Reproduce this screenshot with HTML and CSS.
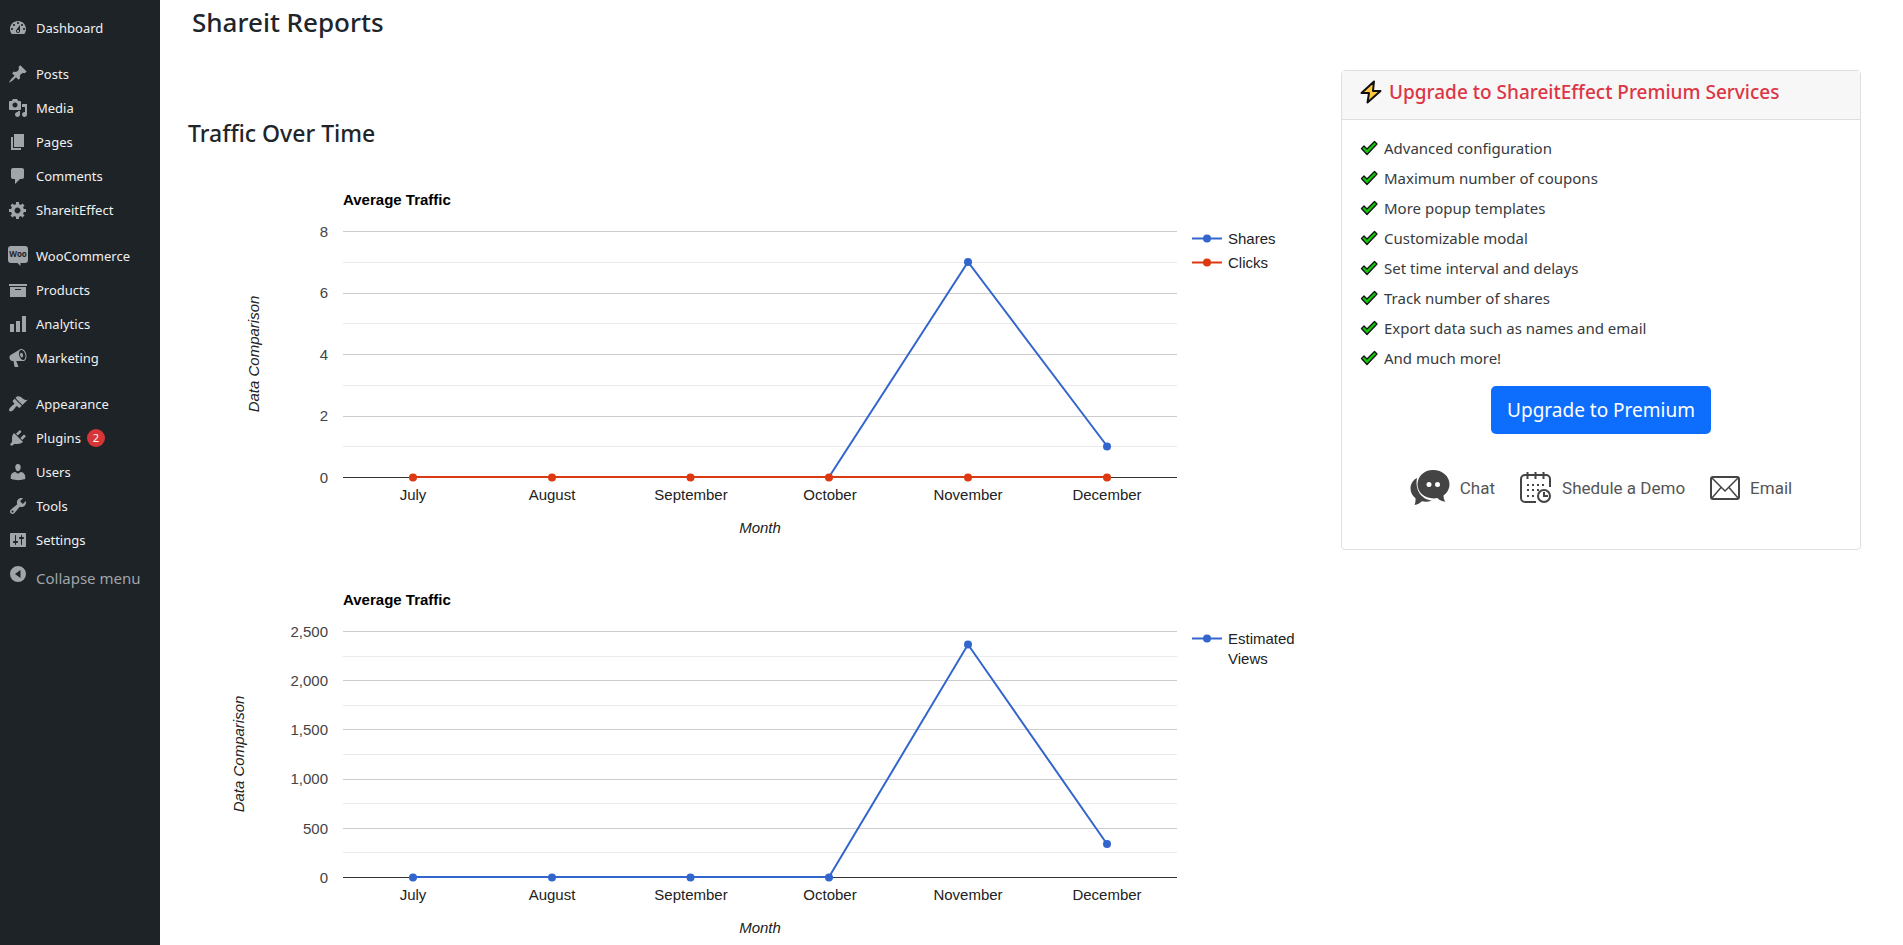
FILE: index.html
```html
<!DOCTYPE html>
<html lang="en">
<head>
<meta charset="utf-8">
<title>Shareit Reports</title>
<link rel="stylesheet" href="styles.css">
</head>
<body>
<div class="layout">
  <nav class="sidebar" aria-label="Main menu">
    <ul class="menu-group">
      <li><a class="menu-item" href="#"><svg class="menu-icon" viewBox="0 0 20 20"><path d="M3.76 16h12.48c1.1-1.37 1.76-3.11 1.76-5 0-4.42-3.58-8-8-8s-8 3.58-8 8c0 1.89.66 3.63 1.76 5zM10 4c.55 0 1 .45 1 1s-.45 1-1 1-1-.45-1-1 .45-1 1-1zM6 6c.55 0 1 .45 1 1s-.45 1-1 1-1-.45-1-1 .45-1 1-1zm8 0c.55 0 1 .45 1 1s-.45 1-1 1-1-.45-1-1 .45-1 1-1zm-5.37 5.55L12 7v6c0 1.1-.9 2-2 2s-2-.9-2-2c0-.57.24-1.08.63-1.45zM4 10c.55 0 1 .45 1 1s-.45 1-1 1-1-.45-1-1 .45-1 1-1zm12 0c.55 0 1 .45 1 1s-.45 1-1 1-1-.45-1-1 .45-1 1-1zm-5 3c0-.55-.45-1-1-1s-1 .45-1 1 .45 1 1 1 1-.45 1-1z"/></svg>Dashboard</a></li>
    </ul>
    <ul class="menu-group">
      <li><a class="menu-item" href="#"><svg class="menu-icon" viewBox="0 0 20 20"><path d="M10.44 3.02l1.82-1.82 6.36 6.35-1.83 1.82c-1.05-.68-2.48-.57-3.41.36l-.75.75c-.92.93-1.04 2.35-.35 3.41l-1.83 1.82-2.41-2.41-2.8 2.79c-.42.42-3.38 2.71-3.8 2.29s1.86-3.39 2.28-3.81l2.79-2.79L4.1 9.36l1.83-1.82c1.05.69 2.48.57 3.4-.36l.75-.75c.93-.92 1.05-2.35.36-3.41z"/></svg>Posts</a></li>
      <li><a class="menu-item" href="#"><svg class="menu-icon" viewBox="0 0 20 20"><path d="M13 11V4c0-.55-.45-1-1-1h-1.67L9 1H5L3.67 3H2c-.55 0-1 .45-1 1v7c0 .55.45 1 1 1h10c.55 0 1-.45 1-1zM7 4.5c1.38 0 2.5 1.12 2.5 2.5S8.38 9.5 7 9.5 4.5 8.38 4.5 7 5.62 4.5 7 4.5zM14 6h5v10.5c0 1.38-1.12 2.5-2.5 2.5S14 17.88 14 16.5s1.12-2.5 2.5-2.5c.17 0 .34.02.5.05V9h-3V6zm-4 8.05V13h2v3.5c0 1.38-1.12 2.5-2.5 2.5S7 17.88 7 16.5 8.12 14 9.5 14c.17 0 .34.02.5.05z"/></svg>Media</a></li>
      <li><a class="menu-item" href="#"><svg class="menu-icon" viewBox="0 0 20 20"><path d="M6 15V2h10v13H6zm-1 1h8v2H3V5h2v11z"/></svg>Pages</a></li>
      <li><a class="menu-item" href="#"><svg class="menu-icon" viewBox="0 0 20 20"><path d="M5 2h9c1.1 0 2 .9 2 2v7c0 1.1-.9 2-2 2h-2l-5 5v-5H5c-1.1 0-2-.9-2-2V4c0-1.1.9-2 2-2z"/></svg>Comments</a></li>
      <li><a class="menu-item" href="#"><svg class="menu-icon" viewBox="0 0 20 20"><path d="M18 12h-2.18c-.17.7-.44 1.35-.81 1.93l1.54 1.54-2.1 2.1-1.54-1.54c-.58.36-1.23.63-1.91.79V19H8v-2.18c-.68-.16-1.33-.43-1.91-.79l-1.54 1.54-2.12-2.12 1.54-1.54c-.36-.58-.63-1.23-.79-1.91H1V9.03h2.17c.16-.7.44-1.35.8-1.94L2.43 5.55l2.1-2.1 1.54 1.54c.58-.37 1.24-.64 1.93-.81V2h3v2.18c.68.16 1.33.43 1.91.79l1.54-1.54 2.12 2.12-1.54 1.54c.36.59.64 1.24.8 1.94H18V12zm-8.5 1.5c1.66 0 3-1.34 3-3s-1.34-3-3-3-3 1.34-3 3 1.34 3 3 3z"/></svg>ShareitEffect</a></li>
    </ul>
    <ul class="menu-group">
      <li><a class="menu-item" href="#"><svg class="menu-icon" viewBox="0 0 20 20"><path d="M3 0h14a3 3 0 0 1 3 3v11a3 3 0 0 1-3 3h-4.500v3L9.500 17H3a3 3 0 0 1-3-3V3a3 3 0 0 1 3-3z"/><text class="woo-mark" x="10" y="11" text-anchor="middle">Woo</text></svg>WooCommerce</a></li>
      <li><a class="menu-item" href="#"><svg class="menu-icon" viewBox="0 0 20 20"><path d="M19 4v2H1V4h18zM2 7h16v10H2V7zm11 3V9H7v1h6z"/></svg>Products</a></li>
      <li><a class="menu-item" href="#"><svg class="menu-icon" viewBox="0 0 20 20"><path d="M18 18V2h-4v16h4zm-6 0V7H8v11h4zm-6 0v-8H2v8h4z"/></svg>Analytics</a></li>
      <li><a class="menu-item" href="#"><svg class="menu-icon" viewBox="0 0 20 20"><path d="M18.150 5.940c.46 1.620.38 3.220-.02 4.480-.42 1.280-1.260 2.180-2.300 2.480-.16.060-.26.060-.4.060-.06.020-.12.020-.18.020-.06.020-.14.020-.22.020h-6.800l2.220 5.500c.02.140-.06.260-.14.340-.08.100-.24.160-.34.160H6.950c-.1 0-.26-.06-.34-.16-.08-.08-.16-.2-.14-.34l-1-5.500H4.250l-.02-.02c-.5.060-1.080-.18-1.540-.62s-.88-1.080-1.060-1.880c-.24-.8-.2-1.560-.02-2.200.18-.62.58-1.080 1.060-1.300l.02-.02 9-5.400c.1-.06.180-.1.240-.16.060-.04.140-.08.240-.12.160-.08.280-.12.500-.18 1.040-.3 2.240.1 3.220.98s1.840 2.240 2.260 3.860zm-2.580 5.980h-.02c.4-.1.740-.34 1.040-.7.580-.7.860-1.760.860-3.040 0-.64-.1-1.300-.28-1.980-.34-1.360-1.020-2.500-1.780-3.240s-1.680-1.100-2.460-.88c-.82.220-1.400.960-1.700 2-.32 1.040-.28 2.360.060 3.720.38 1.360 1 2.500 1.800 3.240.78.740 1.620 1.100 2.480.88zm-2.540-7.080c.22-.04.420-.02.620.04.380.160.760.480 1.020 1s.42 1.200.42 1.780c0 .3-.04.560-.12.800-.18.480-.44.840-.86.940-.34.100-.8-.06-1.140-.4s-.64-.86-.78-1.500c-.18-.62-.12-1.240.02-1.720s.48-.84.82-.94z"/></svg>Marketing</a></li>
    </ul>
    <ul class="menu-group">
      <li><a class="menu-item" href="#"><svg class="menu-icon" viewBox="0 0 20 20"><path d="M14.480 11.060L7.410 3.990l1.500-1.500c.5-.56 2.300-.47 3.510.32 1.210.8 1.430 1.280 2.910 2.100 1.180.64 2.450 1.260 4.450.85zm-.71.710L6.700 4.700 4.930 6.470c-.39.390-.39 1.020 0 1.410l1.060 1.060c.39.390.39 1.030 0 1.420-.6.600-1.430 1.110-2.210 1.690-.35.260-.7.530-1.010.84C1.430 14.230.4 16.080 1.400 17.070c.99 1 2.840-.03 4.180-1.360.31-.31.580-.66.850-1.020.57-.78 1.080-1.610 1.690-2.210.39-.39 1.020-.39 1.410 0l1.060 1.060c.39.390 1.020.39 1.410 0z"/></svg>Appearance</a></li>
      <li><a class="menu-item" href="#"><svg class="menu-icon" viewBox="0 0 20 20"><path d="M13.110 4.360L9.870 7.600 8 5.730l3.240-3.240c.35-.34 1.050-.2 1.560.32.520.51.660 1.210.31 1.550zm-8 1.770l.91-1.120 9.010 9.010-1.190.84c-.71.710-2.630 1.160-3.820 1.160H6.140L4.900 17.260c-.59.590-1.540.59-2.120 0-.59-.58-.59-1.530 0-2.120l1.240-1.240v-3.880c0-1.130.4-3.190 1.090-3.890zm7.260 3.970l3.240-3.240c.34-.35 1.040-.21 1.550.31.520.51.660 1.210.31 1.550l-3.240 3.250z"/></svg>Plugins<span class="badge">2</span></a></li>
      <li><a class="menu-item" href="#"><svg class="menu-icon" viewBox="0 0 20 20"><path d="M10 9.250c-2.270 0-2.730-3.440-2.730-3.440C7 4.020 7.820 2 9.970 2c2.160 0 2.980 2.020 2.710 3.810 0 0-.41 3.440-2.680 3.440zm0 2.570L12.720 10c2.390 0 4.520 2.330 4.520 4.530v2.490s-3.650 1.130-7.240 1.130c-3.650 0-7.240-1.130-7.240-1.130v-2.490c0-2.250 1.940-4.480 4.470-4.480z"/></svg>Users</a></li>
      <li><a class="menu-item" href="#"><svg class="menu-icon" viewBox="0 0 20 20"><path d="M16.680 9.770c-1.340 1.340-3.300 1.670-4.950.99l-5.410 6.520c-.99.990-2.590.99-3.580 0s-.99-2.590 0-3.570l6.520-5.420c-.68-1.650-.35-3.610.99-4.950 1.280-1.280 3.120-1.620 4.720-1.060l-2.890 2.890 2.820 2.820 2.860-2.870c.53 1.580.18 3.390-1.080 4.650zM3.810 16.210c.4.390 1.040.39 1.430 0 .4-.4.400-1.040 0-1.430-.39-.4-1.030-.4-1.430 0-.39.390-.39 1.030 0 1.430z"/></svg>Tools</a></li>
      <li><a class="menu-item" href="#"><svg class="menu-icon" viewBox="0 0 20 20"><path d="M18 16V4c0-.55-.45-1-1-1H3c-.55 0-1 .45-1 1v12c0 .55.45 1 1 1h14c.55 0 1-.45 1-1zM8 11h1c.55 0 1 .45 1 1s-.45 1-1 1H8v1.500c0 .28-.22.5-.5.5s-.5-.22-.5-.5V13H6c-.55 0-1-.45-1-1s.45-1 1-1h1V5.500c0-.28.22-.5.5-.5s.5.220.5.500V11zm5-2h-1c-.55 0-1-.45-1-1s.45-1 1-1h1V5.500c0-.28.22-.5.5-.5s.5.220.5.500V7h1c.55 0 1 .45 1 1s-.45 1-1 1h-1v5.500c0 .28-.22.5-.5.5s-.5-.22-.5-.5V9z"/></svg>Settings</a></li>
    </ul>
    <button class="collapse" type="button"><svg class="menu-icon" viewBox="0 0 20 20"><path fill-rule="evenodd" d="M10 2a8 8 0 1 0 0 16 8 8 0 0 0 0-16zM12.500 6v8L7 10z"/></svg><span>Collapse menu</span></button>
  </nav>

  <main class="main">
    <h1 class="page-title">Shareit Reports</h1>
    <div class="report">
      <section class="charts">
        <h2 class="section-title">Traffic Over Time</h2>
        <svg class="chart" viewBox="0 0 1130 400" role="img" aria-label="Average traffic: shares and clicks by month">
          <text class="chart-title" x="155" y="51">Average Traffic</text>
          <path class="grid-minor" d="M155 108.500H989M155 169.500H989M155 231.500H989M155 292.500H989"/>
          <path class="grid-major" d="M155 77.500H989M155 139.500H989M155 200.500H989M155 262.500H989"/>
          <path class="axis" d="M155 323.500H989"/>
          <g class="y-labels"><text x="140" y="83">8</text><text x="140" y="144">6</text><text x="140" y="206">4</text><text x="140" y="267">2</text><text x="140" y="329">0</text></g>
          <g class="x-labels"><text x="225" y="346">July</text><text x="364" y="346">August</text><text x="503" y="346">September</text><text x="642" y="346">October</text><text x="780" y="346">November</text><text x="919" y="346">December</text></g>
          <text class="axis-title" x="572" y="379">Month</text>
          <text class="axis-title" transform="translate(71 200) rotate(-90)">Data Comparison</text>
          <g class="series-blue"><polyline points="225,323 364,323 503,323 641,323 780,108 919,292"/><circle cx="780" cy="108" r="4"/><circle cx="919" cy="292.500" r="4"/></g>
          <g class="series-red"><polyline points="225,323 919,323"/><circle cx="225" cy="323.500" r="4"/><circle cx="364" cy="323.500" r="4"/><circle cx="502.500" cy="323.500" r="4"/><circle cx="641" cy="323.500" r="4"/><circle cx="780" cy="323.500" r="4"/><circle cx="919" cy="323.500" r="4"/></g>
          <g class="series-blue"><path d="M1004 84.500h30"/><circle cx="1019" cy="84.500" r="4"/></g><text class="legend" x="1040" y="90">Shares</text>
          <g class="series-red"><path d="M1004 108.500h30"/><circle cx="1019" cy="108.500" r="4"/></g><text class="legend" x="1040" y="114">Clicks</text>
        </svg>
        <svg class="chart" viewBox="0 0 1130 391" role="img" aria-label="Average traffic: estimated views by month">
          <text class="chart-title" x="155" y="51">Average Traffic</text>
          <path class="grid-minor" d="M155 102.500H989M155 151.500H989M155 200.500H989M155 249.500H989M155 298.500H989"/>
          <path class="grid-major" d="M155 77.500H989M155 126.500H989M155 175.500H989M155 225.500H989M155 274.500H989"/>
          <path class="axis" d="M155 323.500H989"/>
          <g class="y-labels"><text x="140" y="83">2,500</text><text x="140" y="132">2,000</text><text x="140" y="181">1,500</text><text x="140" y="230">1,000</text><text x="140" y="280">500</text><text x="140" y="329">0</text></g>
          <g class="x-labels"><text x="225" y="346">July</text><text x="364" y="346">August</text><text x="503" y="346">September</text><text x="642" y="346">October</text><text x="780" y="346">November</text><text x="919" y="346">December</text></g>
          <text class="axis-title" x="572" y="379">Month</text>
          <text class="axis-title" transform="translate(56 200) rotate(-90)">Data Comparison</text>
          <g class="series-blue"><polyline points="225,323 364,323 503,323 641,323 780,90.500 919,290"/><circle cx="225" cy="323.500" r="4"/><circle cx="364" cy="323.500" r="4"/><circle cx="502.500" cy="323.500" r="4"/><circle cx="641" cy="323.500" r="4"/><circle cx="780" cy="90.500" r="4"/><circle cx="919" cy="290" r="4"/></g>
          <g class="series-blue"><path d="M1004 84.500h30"/><circle cx="1019" cy="84.500" r="4"/></g><text class="legend" x="1040" y="90">Estimated<tspan x="1040" dy="20">Views</tspan></text>
        </svg>
      </section>

      <aside class="card">
        <header class="card-header">
          <svg class="bolt" viewBox="0 0 22 24"><path d="M14 1.500 1.500 13H9L7.500 22.500 20.500 11H13z" fill="#ffc83d" stroke="#111" stroke-width="2" stroke-linejoin="round"/></svg>
          <h2 class="card-title">Upgrade to ShareitEffect Premium Services</h2>
        </header>
        <div class="card-body">
          <svg class="defs" aria-hidden="true"><symbol id="check" viewBox="0 0 18 16"><path d="M1.500 8.500 4 6l3 3L14.500 1.500 17 4 7 14.500z" fill="#16c60c" stroke="#111" stroke-width="1.300" stroke-linejoin="round"/></symbol></svg>
          <ul class="features">
            <li><svg class="check"><use href="#check"/></svg>Advanced configuration</li>
            <li><svg class="check"><use href="#check"/></svg>Maximum number of coupons</li>
            <li><svg class="check"><use href="#check"/></svg>More popup templates</li>
            <li><svg class="check"><use href="#check"/></svg>Customizable modal</li>
            <li><svg class="check"><use href="#check"/></svg>Set time interval and delays</li>
            <li><svg class="check"><use href="#check"/></svg>Track number of shares</li>
            <li><svg class="check"><use href="#check"/></svg>Export data such as names and email</li>
            <li><svg class="check"><use href="#check"/></svg>And much more!</li>
          </ul>
          <button class="upgrade" type="button">Upgrade to Premium</button>
          <div class="contacts">
            <a class="contact" href="#"><svg width="40" height="36" viewBox="0 0 40 36"><path fill="#444" d="M7 8C3 10 .5 14 .5 18.500c0 4 2 7.300 5 9.700.2 2.800-.2 5-.9 6.800 3-.6 5.400-1.900 7.300-3.800 3.200.8 6.900.6 9.800-.7C12.500 29.500 4.500 21 7 8z"/><path fill="#444" d="M23 0c9.500 0 16.500 6.300 16.500 14.200 0 5-2.600 8.800-6 11.200 0 2.400.6 4.600 2 6.400-3.700-.2-6.200-1.700-8-3.700C16 30 7.500 23 7.500 14.500 7.500 6.300 14 0 23 0z"/><circle cx="19" cy="14.500" r="2.500" fill="#fff"/><circle cx="27.500" cy="14.500" r="2.500" fill="#fff"/></svg><span>Chat</span></a>
            <a class="contact" href="#"><svg width="32" height="32" viewBox="0 0 32 32" fill="none" stroke="#444" stroke-width="2"><path d="M16 30H5a4 4 0 0 1-4-4V7a4 4 0 0 1 4-4h21a4 4 0 0 1 4 4v8M7.500 0v7M15.500 0v7M23.500 0v7"/><path stroke-dasharray="2 3" d="M7 13h18M7 18h12M7 24h8"/><circle cx="24" cy="24" r="6"/><path d="M24 20v4h4"/></svg><span>Shedule a Demo</span></a>
            <a class="contact" href="#"><svg width="30" height="24" viewBox="0 0 30 24" fill="none" stroke="#444" stroke-width="2" stroke-linejoin="round"><rect x="1" y="1" width="28" height="22" rx="2"/><path stroke-width="1.500" d="M2 2l13 13L28 2M2 22l9-10.500M28 22l-9-10.500"/></svg><span>Email</span></a>
          </div>
        </div>
      </aside>
    </div>
  </main>
</div>
</body>
</html>
```

FILE: styles.css
```css
* { box-sizing: border-box; }

body {
  margin: 0;
  background: #fff;
  color: #212529;
  font-family: "Noto Sans", "Open Sans", sans-serif;
  font-size: 15px;
}

h1, h2, ul { margin: 0; padding: 0; }
ul { list-style: none; }
a { color: inherit; text-decoration: none; }
button { font: inherit; border: 0; cursor: pointer; }

.layout { display: flex; min-height: 100vh; }

/* Sidebar */
.sidebar {
  display: flex;
  flex: none;
  flex-direction: column;
  gap: 12px;
  width: 160px;
  padding-top: 11px;
  background: #1d2327;
  color: #f0f0f1;
  font-size: 13px;
}
.menu-item {
  display: flex;
  align-items: center;
  gap: 8px;
  height: 34px;
  padding-left: 8px;
}
.menu-icon { flex: none; width: 20px; height: 20px; fill: #a0a5aa; }
.woo-mark { fill: #1d2327; font: bold 8px "Open Sans", sans-serif; }
.badge {
  width: 18px;
  height: 18px;
  margin-left: -2px;
  border-radius: 9px;
  background: #d63638;
  color: #fff;
  font-size: 11px;
  line-height: 18px;
  text-align: center;
}
.collapse {
  display: flex;
  align-items: flex-start;
  gap: 8px;
  padding: 0 0 0 8px;
  margin-top: -5px;
  background: none;
  color: #a0a5aa;
  font-size: 15px;
  line-height: 28px;
}

/* Main area */
.main { flex: 1; min-width: 0; padding: 5px 42px 0 28px; }
.page-title {
  height: 65px;
  padding-left: 4px;
  font-size: 26px;
  font-weight: 500;
  line-height: 34px;
}
.report {
  display: grid;
  grid-template-columns: minmax(0, 1fr) 520px;
  align-items: start;
  gap: 23px;
}
.section-title {
  padding-top: 49px;
  margin-bottom: 7px;
  font-size: 23px;
  font-weight: 500;
  line-height: 28px;
}

/* Charts */
.chart {
  display: block;
  width: 100%;
  height: auto;
  font-family: "Liberation Sans", Arial, sans-serif;
  font-size: 15px;
  fill: #222;
}
.chart-title { fill: #000; font-weight: bold; }
.grid-minor { stroke: #ebebeb; }
.grid-major { stroke: #ccc; }
.axis { stroke: #333; }
.y-labels { fill: #444; text-anchor: end; }
.x-labels { text-anchor: middle; }
.axis-title { font-style: italic; text-anchor: middle; }
.series-blue { fill: #36c; stroke: #36c; stroke-width: 2; }
.series-red { fill: #dc3912; stroke: #dc3912; stroke-width: 2; }
.chart polyline { fill: none; }
.chart circle { stroke: none; }

/* Upgrade card */
.card {
  border: 1px solid #dfdfdf;
  border-radius: 4px;
  background: #fff;
}
.card-header {
  display: flex;
  align-items: flex-start;
  gap: 7px;
  height: 49px;
  padding: 9px 18px;
  border-bottom: 1px solid #dfdfdf;
  background: #f7f7f7;
}
.bolt { flex: none; width: 22px; height: 24px; }
.card-title {
  color: #dc3545;
  font-size: 19px;
  font-weight: 500;
  line-height: 24px;
  white-space: nowrap;
}
.card-body {
  display: flex;
  flex-direction: column;
  align-items: center;
  padding: 13px 18px 43px;
}
.defs { display: none; }
.features { align-self: stretch; color: #363a3e; }
.features li {
  display: flex;
  align-items: center;
  gap: 6px;
  height: 30px;
}
.check { width: 18px; height: 16px; }
.upgrade {
  height: 48px;
  padding: 0 16px;
  margin-top: 13px;
  border-radius: 5px;
  background: #0d6efd;
  color: #fff;
  font-size: 19px;
}
.contacts {
  display: flex;
  align-items: center;
  gap: 25px;
  margin-top: 36px;
  color: #555;
  font-family: Roboto, sans-serif;
  font-size: 17px;
}
.contact { display: flex; align-items: center; gap: 10px; }
```
